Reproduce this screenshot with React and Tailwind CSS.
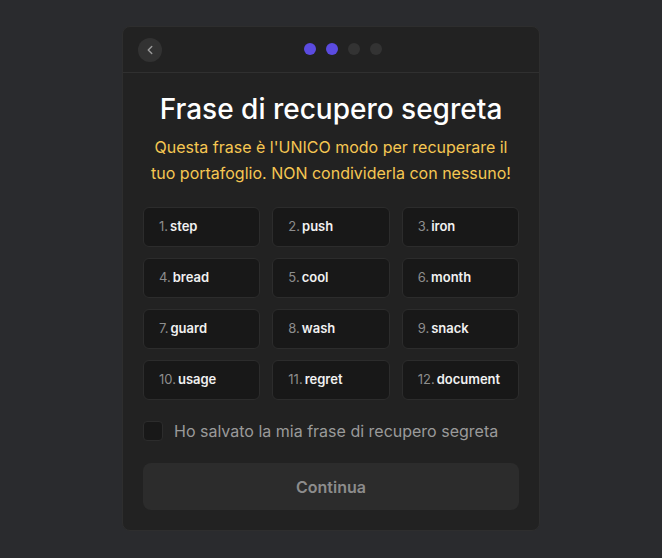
import { ChevronLeft } from 'lucide-react';

const words = [
  'step', 'push', 'iron',
  'bread', 'cool', 'month',
  'guard', 'wash', 'snack',
  'usage', 'regret', 'document',
];

const WordCell = ({ index, word }) => (
  <div className="h-10 flex items-center pl-[15px] rounded-md bg-[#181818] border border-[#2c2c2c] text-[13px]">
    <span className="text-[#8d8d8d] mr-[2px]">{index}.</span>
    <span className="text-[#f1f1f1] font-semibold">{word}</span>
  </div>
);

export default function App() {
  return (
    <div
      className="min-h-[558px] bg-[#2a2b2e] flex justify-center pt-[26px]"
      style={{ fontFamily: 'Inter, "Noto Sans", sans-serif' }}
    >
      <div className="w-[418px] h-[505px] bg-[#222222] border border-[#2e2e2e] rounded-lg flex flex-col">
        {/* header */}
        <div className="h-[46px] relative flex items-center justify-center border-b border-[#303030]">
          <button className="absolute left-[15px] w-6 h-6 rounded-full bg-[#323232] flex items-center justify-center text-[#9a9a9a]">
            <ChevronLeft size={14} strokeWidth={2.5} />
          </button>
          <div className="flex items-center gap-[10px] ml-6 -mt-[2px]">
            <span className="w-3 h-3 rounded-full bg-[#5b4be0]" />
            <span className="w-3 h-3 rounded-full bg-[#5b4be0]" />
            <span className="w-3 h-3 rounded-full bg-[#333333]" />
            <span className="w-3 h-3 rounded-full bg-[#333333]" />
          </div>
        </div>

        <div className="px-5 flex flex-col">
          <h1 className="text-center text-white text-[28px] font-medium mt-[17px] leading-[38px]">
            Frase di recupero segreta
          </h1>
          <p className="text-center text-[#f6c752] text-[16px] leading-[26px] mt-[6px]">
            Questa frase è l'UNICO modo per recuperare il
            <br />
            tuo portafoglio. NON condividerla con nessuno!
          </p>

          <div className="grid grid-cols-3 gap-x-3 gap-y-[11px] mt-[21px]">
            {words.map((w, i) => (
              <WordCell key={w} index={i + 1} word={w} />
            ))}
          </div>

          <label className="flex items-center gap-[11px] mt-[19px]">
            <span className="w-5 h-5 rounded-[4px] bg-[#181818] border border-[#2c2c2c]" />
            <span className="text-[#9a9a9a] text-[16px]">Ho salvato la mia frase di recupero segreta</span>
          </label>

          <button className="mt-[20px] h-[47px] w-full rounded-lg bg-[#2c2c2c] text-[#8c8c8c] font-semibold text-[16px]">
            Continua
          </button>
        </div>
      </div>
    </div>
  );
}
